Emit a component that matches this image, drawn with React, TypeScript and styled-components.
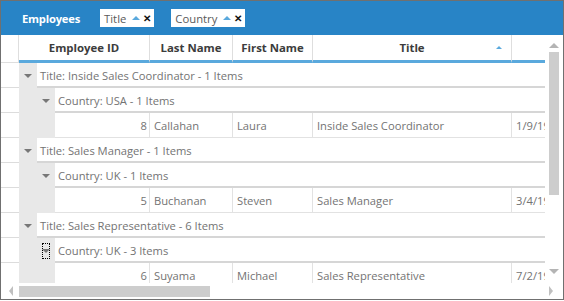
import React from "react";
import styled, { createGlobalStyle } from "styled-components";

const GlobalStyle = createGlobalStyle`
  body {
    margin: 0;
    font-family: "Open Sans", "Noto Sans", sans-serif;
  }
`;

const Frame = styled.div`
  width: 564px;
  height: 300px;
  box-sizing: border-box;
  border: 1px solid #707070;
  display: flex;
  flex-direction: column;
  overflow: hidden;
  background: #fff;
`;

const TopBar = styled.div`
  height: 34px;
  flex-shrink: 0;
  background: #2884c6;
  display: flex;
  align-items: center;
  padding-left: 21px;
`;

const BarTitle = styled.div`
  color: #fff;
  font-weight: 700;
  font-size: 11.2px;
  letter-spacing: -0.2px;
  margin-right: 20px;
`;

const Chip = styled.div`
  height: 18px;
  background: #fff;
  display: flex;
  align-items: center;
  padding: 0 3px 0 4px;
  margin-right: 17px;
  font-size: 11.3px;
  color: #5a5a5a;
`;

const ChipArrow = styled.span`
  width: 0;
  height: 0;
  border-left: 4px solid transparent;
  border-right: 4px solid transparent;
  border-bottom: 4px solid #5aa9dd;
  margin: 0 3px 0 6px;
`;

const ChipClose = styled.span`
  font-size: 10px;
  font-weight: 700;
  color: #111;
  line-height: 1;
`;

const Body = styled.div`
  flex: 1;
  display: flex;
  min-height: 0;
`;

const GridArea = styled.div`
  width: 544px;
  overflow: hidden;
  display: flex;
  flex-direction: column;
`;

const Row = styled.div`
  display: flex;
  flex-shrink: 0;
  height: 25px;
`;

const HeaderRow = styled(Row)`
  height: 28px;
`;

const HeaderCell = styled.div<{ $w: number }>`
  width: ${(p) => p.$w}px;
  flex-shrink: 0;
  box-sizing: border-box;
  border-right: 1px solid #dedede;
  border-bottom: 3px solid #5aa9dd;
  display: flex;
  align-items: center;
  justify-content: center;
  position: relative;
  font-size: 11.4px;
  font-weight: 700;
  color: #3c3c3c;
`;

const IndicatorHead = styled.div`
  width: 18px;
  flex-shrink: 0;
  box-sizing: border-box;
  border-right: 1px solid #dedede;
  border-bottom: 1px solid #dedede;
`;

const SortMark = styled.span`
  position: absolute;
  right: 9px;
  top: 11px;
  width: 0;
  height: 0;
  border-left: 3px solid transparent;
  border-right: 3px solid transparent;
  border-bottom: 3px solid #5aa9dd;
`;

const Indicator = styled.div`
  width: 18px;
  flex-shrink: 0;
  box-sizing: border-box;
  border-bottom: 1px solid #dcdcdc;
`;

const Indent = styled.div`
  width: 18px;
  flex-shrink: 0;
  background: #e8e8e8;
  display: flex;
  align-items: center;
  justify-content: center;
`;

const Expander = styled.span<{ $focus?: boolean }>`
  display: flex;
  align-items: center;
  justify-content: center;
  width: 6px;
  height: 14px;
  outline: ${(p) => (p.$focus ? "1px dotted #000" : "none")};
  &::after {
    content: "";
    width: 0;
    height: 0;
    border-left: 4px solid transparent;
    border-right: 4px solid transparent;
    border-top: 4px solid #777;
  }
`;

const GroupCell = styled.div`
  flex: 1 0 500px;
  box-sizing: border-box;
  border-bottom: 2px solid #d6d6d6;
  display: flex;
  align-items: center;
  padding-left: 3px;
  padding-top: 1px;
  font-size: 11.2px;
  color: #737373;
  white-space: nowrap;
`;

const Cell = styled.div<{ $w: number; $right?: boolean }>`
  width: ${(p) => p.$w}px;
  flex-shrink: 0;
  box-sizing: border-box;
  border-right: 1px solid #e2e2e2;
  border-bottom: 1px solid #e2e2e2;
  display: flex;
  align-items: center;
  justify-content: ${(p) => (p.$right ? "flex-end" : "flex-start")};
  padding: 0 4px;
  padding-right: ${(p) => (p.$right ? "2px" : "4px")};
  font-size: 11.2px;
  color: #737373;
  white-space: nowrap;
  overflow: hidden;
`;

const VScroll = styled.div`
  width: 18px;
  flex-shrink: 0;
  display: flex;
  flex-direction: column;
  align-items: center;
  background: #fff;
`;

const ArrowUp = styled.span`
  margin-top: 8px;
  width: 0;
  height: 0;
  border-left: 5px solid transparent;
  border-right: 5px solid transparent;
  border-bottom: 5px solid #b4b4b4;
`;

const ArrowDown = styled.span`
  margin-bottom: 9px;
  width: 0;
  height: 0;
  border-left: 5px solid transparent;
  border-right: 5px solid transparent;
  border-top: 5px solid #b4b4b4;
`;

const VTrack = styled.div`
  flex: 1;
  width: 10px;
  padding-top: 4px;
`;

const VThumb = styled.div`
  height: 143px;
  background: #cdcdcd;
`;

const HScroll = styled.div`
  height: 16px;
  flex-shrink: 0;
  display: flex;
  align-items: center;
`;

const ArrowLeft = styled.span`
  width: 0;
  height: 0;
  margin: 0 6px 0 8px;
  border-top: 5px solid transparent;
  border-bottom: 5px solid transparent;
  border-right: 4px solid #c0c0c0;
`;

const ArrowRight = styled.span`
  width: 0;
  height: 0;
  margin: 0 10px 0 0;
  border-top: 5px solid transparent;
  border-bottom: 5px solid transparent;
  border-left: 4px solid #c0c0c0;
`;

const HTrack = styled.div`
  flex: 1;
  height: 11px;
`;

const HThumb = styled.div`
  width: 191px;
  height: 100%;
  background: #cdcdcd;
`;

type TRow =
  | { kind: "group"; level: number; text: string; focus?: boolean }
  | { kind: "data"; id: number; last: string; first: string; title: string; hired: string };

const rows: Array<TRow> = [
  { kind: "group", level: 1, text: "Title: Inside Sales Coordinator - 1 Items" },
  { kind: "group", level: 2, text: "Country: USA - 1 Items" },
  { kind: "data", id: 8, last: "Callahan", first: "Laura", title: "Inside Sales Coordinator", hired: "1/9/1994" },
  { kind: "group", level: 1, text: "Title: Sales Manager - 1 Items" },
  { kind: "group", level: 2, text: "Country: UK - 1 Items" },
  { kind: "data", id: 5, last: "Buchanan", first: "Steven", title: "Sales Manager", hired: "3/4/1993" },
  { kind: "group", level: 1, text: "Title: Sales Representative - 6 Items" },
  { kind: "group", level: 2, text: "Country: UK - 3 Items", focus: true },
  { kind: "data", id: 6, last: "Suyama", first: "Michael", title: "Sales Representative", hired: "7/2/1993" },
];

const GridRow: React.FC<{ row: TRow }> = ({ row }) => {
  if (row.kind === "group") {
    return (
      <Row>
        <Indicator />
        {row.level === 2 && <Indent />}
        <Indent>
          <Expander $focus={row.focus} />
        </Indent>
        <GroupCell>{row.text}</GroupCell>
      </Row>
    );
  }
  return (
    <Row>
      <Indicator />
      <Indent />
      <Indent />
      <Cell $w={95} $right>
        {row.id}
      </Cell>
      <Cell $w={83}>{row.last}</Cell>
      <Cell $w={80}>{row.first}</Cell>
      <Cell $w={199}>{row.title}</Cell>
      <Cell $w={150}>{row.hired}</Cell>
    </Row>
  );
};

export default function App() {
  return (
    <>
      <GlobalStyle />
      <Frame>
        <TopBar>
          <BarTitle>Employees</BarTitle>
          <Chip>
            Title
            <ChipArrow />
            <ChipClose>✕</ChipClose>
          </Chip>
          <Chip>
            Country
            <ChipArrow />
            <ChipClose>✕</ChipClose>
          </Chip>
        </TopBar>
        <Body>
          <GridArea>
            <HeaderRow>
              <IndicatorHead />
              <HeaderCell $w={131}>Employee ID</HeaderCell>
              <HeaderCell $w={83}>Last Name</HeaderCell>
              <HeaderCell $w={80}>First Name</HeaderCell>
              <HeaderCell $w={199}>
                Title
                <SortMark />
              </HeaderCell>
              <HeaderCell $w={150}>Hire Date</HeaderCell>
            </HeaderRow>
            {rows.map((r, i) => (
              <GridRow key={i} row={r} />
            ))}
          </GridArea>
          <VScroll>
            <ArrowUp />
            <VTrack>
              <VThumb />
            </VTrack>
            <ArrowDown />
          </VScroll>
        </Body>
        <HScroll>
          <ArrowLeft />
          <HTrack>
            <HThumb />
          </HTrack>
          <ArrowRight />
        </HScroll>
      </Frame>
    </>
  );
}
